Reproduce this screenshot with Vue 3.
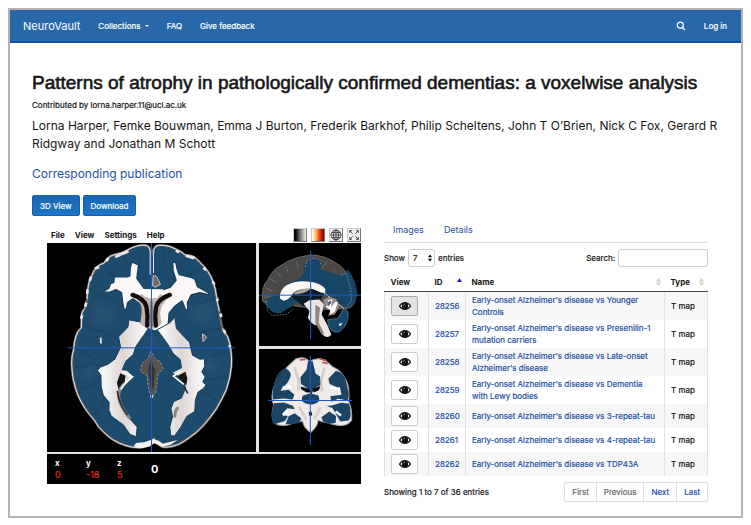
<script setup>
import { ref } from 'vue'

const images = [
  { id: 28256, name: "Early-onset Alzheimer's disease vs Younger Controls" },
  { id: 28257, name: "Early-onset Alzheimer's disease vs Presenilin-1 mutation carriers" },
  { id: 28258, name: "Early-onset Alzheimer's disease vs Late-onset Alzheimer's disease" },
  { id: 28259, name: "Early-onset Alzheimer's disease vs Dementia with Lewy bodies" },
  { id: 28260, name: "Early-onset Alzheimer's disease vs 3-repeat-tau" },
  { id: 28261, name: "Early-onset Alzheimer's disease vs 4-repeat-tau" },
  { id: 28262, name: "Early-onset Alzheimer's disease vs TDP43A" }
]
const selected = ref(28256)
const pageSize = ref('7')
const search = ref('')
</script>

<template>
  <div class="frame">
    <nav class="navbar">
      <a class="brand" href="#">NeuroVault</a>
      <a href="#">Collections <span class="caret"></span></a>
      <a href="#">FAQ</a>
      <a href="#">Give feedback</a>
      <a class="search-link" href="#" aria-label="Search">
        <svg viewBox="0 0 10 10"><circle cx="4.3" cy="4.2" r="3" /><path d="M6.5 6.5 9 9" /></svg>
      </a>
      <a href="#">Log in</a>
    </nav>

    <main>
      <h1>Patterns of atrophy in pathologically confirmed dementias: a voxelwise analysis</h1>
      <p class="contributor">Contributed by lorna.harper.11@ucl.ac.uk</p>
      <p class="authors">Lorna Harper, Femke Bouwman, Emma J Burton, Frederik Barkhof, Philip Scheltens, John T O’Brien, Nick C Fox, Gerard R Ridgway and Jonathan M Schott</p>
      <p class="publication"><a href="#">Corresponding publication</a></p>
      <div class="actions">
        <button type="button">3D View</button>
        <button type="button">Download</button>
      </div>

      <div class="columns">
        <section class="viewer">
          <div class="menu">
            <button type="button">File</button>
            <button type="button">View</button>
            <button type="button">Settings</button>
            <button type="button">Help</button>
            <div class="tools">
              <button type="button" aria-label="Grayscale"><span class="gray-map"></span></button>
              <button type="button" aria-label="Heat"><span class="heat-map"></span></button>
              <button type="button" aria-label="Orientation">
                <svg viewBox="0 0 14 14"><circle cx="7" cy="7" r="5.800" /><ellipse cx="7" cy="7" rx="2.800" ry="5.800" /><path d="M7 1v12M1 7h12M2.200 4.100h9.600M2.200 9.900h9.600" /></svg>
              </button>
              <button type="button" aria-label="Expand">
                <svg viewBox="0 0 14 14"><path d="M5.500 5.500 3 3M8.500 5.500 11 3M5.500 8.500 3 11M8.500 8.500 11 11" /><path class="solid" d="M1.500 1.500h3.500L1.500 5zM12.500 1.500V5L9 1.500zM1.500 12.500V9L5 12.500zM12.500 12.500H9L12.500 9z" /></svg>
              </button>
            </div>
          </div>

          <div class="panels">
            <svg class="axial" viewBox="20 10 628 628">
              <defs>
                <filter id="soft"><feGaussianBlur stdDeviation="1.8" /></filter>
                <filter id="haze"><feGaussianBlur stdDeviation="9" /></filter>
                <linearGradient id="matter" x1="0" x2="1">
                  <stop offset="0" stop-color="#fff" /><stop offset=".5" stop-color="#ddd6d4" /><stop offset="1" stop-color="#fff" />
                </linearGradient>
              </defs>
              <g filter="url(#soft)">
                <path fill="#1e4b6d" stroke="#6a6664" stroke-width="7" stroke-linejoin="round" d="M335 45Q333 22 318 17Q304 15 290 19Q275 23 262 31Q245 41 232 43Q219 45 208 51Q198 58 192 70Q179 74 170 82Q160 93 155 107Q146 124 144 140Q139 160 141 178L133 207Q122 219 124 230L123 265Q111 275 107 290Q101 309 100 330Q94 350 94 370Q95 398 99 420Q104 443 112 465Q122 488 135 508Q147 526 162 542Q173 563 187 575Q200 588 216 600Q235 612 255 618Q278 626 300 625Q316 623 325 617L341 598L353 613Q363 624 376 624Q395 623 415 615Q432 607 450 593Q472 578 490 558Q511 535 529 508Q546 479 559 450Q571 415 574 380Q576 354 572 330Q570 308 562 290Q549 277 547 265Q540 240 538 215Q532 192 529 170Q527 150 520 130Q514 110 503 95Q494 81 480 69Q472 58 460 51Q448 46 435 46Q424 36 410 30Q391 18 370 17Q355 15 347 20Q337 28 335 45Z" />
                <path fill="none" stroke="#eee9e8" stroke-width="3" d="M330 105V34Q325 17 318 17Q304 15 290 19Q275 23 262 31Q245 41 232 43Q219 45 208 51Q198 58 192 70Q179 74 170 82Q160 93 155 107Q146 124 144 140Q139 160 141 178M133 207Q122 219 124 230L123 265Q111 275 107 290Q101 309 100 330Q94 350 94 370Q95 398 99 420Q104 443 112 465Q122 488 135 508Q147 526 162 542Q173 563 187 575Q200 588 216 600Q235 612 255 618Q278 626 300 625Q316 623 325 617L341 598L353 613Q363 624 376 624Q395 623 415 615Q432 607 450 593Q472 578 490 558Q511 535 529 508Q546 479 559 450Q571 415 574 380Q576 354 572 330Q570 308 562 290Q549 277 547 265M538 215Q532 192 529 170Q527 150 520 130Q514 110 503 95Q494 81 480 69Q472 58 460 51Q448 46 435 46Q424 36 410 30Q391 18 370 17Q355 15 347 20Q339 28 340 45V100" />
                <g fill="none" stroke="#ece7e6" stroke-width="8">
                  <path stroke-dasharray="13 27" d="m205 55-17 22-23 10-13 25-10 33-2 38-9 30-9 25" />
                  <path stroke-dasharray="11 39" d="m407 33 26 13 28 8 42 43 19 36 9 43 10 42 8 50 17 30 5 34" />
                  <path d="m225 52 40-17M437 48l25 8" />
                </g>
                <path fill="#f4f0ef" d="m280 621 8-10 24-2 11-4 15-5 18 4 12 9 24-6 20-5-20 14-25 6-25-10-15 10-26 5z" />
                <g fill="none" stroke="#143a57" stroke-width="6" opacity=".4" stroke-linecap="round">
                  <path d="M200 95q20 8 35 35M165 160l50 18M150 265l68 22M118 330l48 30M110 385l46-10M125 450l45-24M168 525l25-42M245 48l16 20M530 175l-64 20M545 265l-75 18M565 335l-48 14M563 410l-52 10M535 485l-56-35M490 545l-35-44M472 90l-30 20M425 67l-10 15M370 35v40M300 45v40" />
                </g>
                <g fill="#406580" opacity=".25" filter="url(#haze)"><circle cx="190" cy="225" r="34" /><circle cx="488" cy="220" r="34" /><circle cx="335" cy="310" r="20" /><circle cx="510" cy="380" r="24" /><circle cx="150" cy="400" r="22" /></g>
              </g>
              <g filter="url(#soft)">
                <path fill="#faf7f6" stroke="#17405f" stroke-width="4" stroke-linejoin="round" d="m275 67-5 18-1 24-7 3-40-1-1 17-10 4-5 14-21 12 26-1 16-7 17 9 3 26 4 23 7 2 4-21 16-11 20 14 18 9 7 24-4 31 22 19 33-7 10-10 3-37 17-21 22-16 10 26 7 1-1-22 11-23 26-7 26 6 2-4-35-20-8-23-12-5-35-8-6-17-4-19-9-2 1 27 9 28-18 21-28 9-26 4-24-9-22-31 5-40z" />
                <path fill="url(#matter)" stroke="#17405f" stroke-width="3" d="M298 247 266 241 263 263 235 292 241 323 224 359 204 374 180 383 172 393 182 407 183 441 189 467 207 489 206 512 213 530 250 557 269 585 288 592 291 563 273 543 253 516 243 493 236 456 250 438 280 411 260 392 246 391 257 365 279 345 287 321 305 295 324 268z" />
                <path fill="url(#matter)" stroke="#17405f" stroke-width="3" d="m351 271 39-22 14-16 5 34 25 27 14 14 9 39 22 12 14-1 1 22-9 17 10 15-7 16 10 8-8 11-16 11-8 23-2 35-24 15-17 31-20 28-11-1-3-26 8-30-4-26 7-20 24-11 12-30-6-18-21-21-15-7 30-15-4-25-20-17-16-27-17-24z" />
                <path fill="#bdb3ac" d="M285 175Q308 192 304 222L300 252Q334 284 364 252L360 222Q362 192 385 175L350 158H315z" />
                <path fill="#fff" d="m290 148 80 1-17 25-19 3-21-6z" />
                <path fill="none" stroke="#15100e" stroke-width="13" stroke-linecap="round" d="M277 166Q313 177 319 202Q324 228 321 258M389 166Q354 178 348 202Q343 228 347 258" />
                <path fill="#857c77" d="M330 186h8l2 72-6 8-6-8z" />
                <path fill="#161313" d="m240 401 16 8-3 19-18 22-5-20zM412 410l24-13 6 21-4 20z" />
                <path fill="none" stroke="#8d8581" stroke-width="9" d="M256 430Q228 452 238 486Q249 514 270 538M416 505Q404 508 404 534" />
                <path fill="none" stroke="#312e2e" stroke-width="5" d="M231 454Q238 497 262 527M432 442l11 20" />
                <path fill="none" stroke="#fff" stroke-width="5" d="m247 396 30 16-26 24-9 14M424 394l-24 16 31 25" />
                <path fill="#59534f" stroke="#918a84" stroke-width="3" stroke-dasharray="8 5" d="m333 334-10 25-18 14-4 22 20 14 3 34 9 31 13-12 5-37 3-20 15-17-9-22-15-8z" />
                <path fill="#393431" d="m332 360-8 29 8 61 8-5 5-54z" />
                <path fill="#e7dfe0" d="m330 471 5-7 5 8-7 7zM179 294l5 1 1 18-6-2z" />
                <path fill="#72676a" stroke="#cfc3c4" stroke-width="3" d="m487 283 13 10-11 14zM339 108l10 2 12 24-17 9-7-5z" />
              </g>
              <path class="cross" d="M82 325h502M334 10v628" />
            </svg>

            <svg class="sagittal" viewBox="11 70 306 310" preserveAspectRatio="none">
              <g filter="url(#soft)">
                <path fill="#4b4846" stroke="#6d6966" stroke-width="3" d="M21 244Q20 195 36 184Q51 149 77 138Q108 114 167 106Q208 107 241 130Q270 145 284 181Q308 217 301 234Q298 268 269 267L209 270L138 262L90 255L43 261Z" />
                <path fill="none" stroke="#6f6d6b" stroke-width="3" d="M27 234l18-4M31 205l20 10M45 178l19 11M63 157l16 16M90 139l10 20M123 125l6 21M215 125l-15 22M242 148l-14 15" />
                <path fill="#184565" d="M31 254Q34 232 51 232L78 219Q86 193 105 190L135 175Q151 160 148 132L165 118L187 117Q204 126 201 134L193 149L224 157 259 169 278 150Q304 185 306 225L295 257 276 265 248 251 208 217 147 224 116 257 76 281Q47 286 31 254Z" />
                <path fill="none" stroke="#a5aaad" stroke-width="2" stroke-dasharray="5 4" d="m151 142 2-17 24-10 21 8-3 13M34 244l2 30 15 14 42-3 21-17M258 167l13-8 15 45 2 40-15 20" />
                <path fill="#101b27" d="m101 225 55-21 26 1 24 17-11 20-49 20z" />
                <path fill="#fbf8f7" d="M74 237Q70 214 93 197Q127 180 165 187Q196 192 210 208L209 221L196 219Q171 205 160 208Q132 207 114 220Q103 242 84 244Z" />
                <path fill="none" stroke="#d9d6d4" stroke-width="3" d="M203 217l66 53" />
                <path fill="#aaa19c" d="M113 222l26-14 27 1-19 11-25 5z" />
                <path fill="#ece6e3" d="M145 253l17-11 30-2 14 15-7 30 17 32 12 29q-14 16-31-7l-9-22q-17 3-30-21l4-21z" />
                <path fill="#908781" d="m180 255 14 9-4 45 16 33-6 5-20-36z" />
                <path fill="#17476a" stroke="#78838a" stroke-width="2" d="M217 301l30-4 20-32 11 13q5 34-25 59-22 7-34-19z" />
                <path fill="#998985" d="m205 239 18-7 20 7 9 25-14 21-20 4 9-16-23-11z" />
                <path fill="#fff" d="m217 242 14-3-4 25 12-16 9-1-10 31-16 8 3-14-14-10 12-7zM250 314l12-4-8 11z" />
                <path fill="#286493" d="m224 242 5 6-11 14 1-14z" />
              </g>
              <path class="cross" d="M11 227h306M166 93v267" />
            </svg>

            <svg class="coronal" viewBox="11 15 306 308" preserveAspectRatio="none">
              <g filter="url(#soft)">
                <path fill="#f0eae8" stroke="#aaa6a6" stroke-width="3" d="M121 45Q140 39 150 43L163 52Q184 38 209 48L233 69Q258 80 272 108Q284 130 280 171Q291 195 289 227Q278 245 251 244Q225 240 188 228Q189 243 167 264Q147 255 141 230L113 237Q81 250 58 237Q44 222 55 181Q43 160 59 119Q67 90 92 72Z" />
                <path fill="#1a4565" d="M91 72Q109 84 106 96Q100 117 80 132l-4 8 24-3 17 15-5 14-28-3-31 3Q49 138 61 103Q72 78 91 72zM56 177l29-2 28 10 5 10-22-3-16 17 18 8-10 14-34 10Q43 215 56 177zM91 239l9-23 18-9 20 15-7 15-25 3zM158 51l14 1 9 37 13 8 3 25-20 10-9 19-10-18-21-13-2-20 19-24zM242 80Q267 86 272 111L281 150 277 169 248 164 228 173 225 156 258 152 255 134 223 120 219 104zM229 184l29-8 24 3Q291 220 280 229L255 232 247 218 232 192 214 185zM198 219l24-17 20 13-1 21-23 3-15-8zM142 155l23-8 24 7q11 24-23 27-35-3-24-26z" />
                <path fill="none" stroke="#fff" stroke-width="8" d="m82 130 25-3M223 131l31 3M83 213l15-14M241 202l16 12" />
                <path fill="#090b0e" d="m136 127 23 6 9 11-14 1-16-9zM171 134l24-8-4 12-16 7zM160 205l7-5 4 12-8 4z" />
                <path fill="none" stroke="#c5bdb9" stroke-width="8" opacity=".6" d="m118 70 13 42-2 28M208 70l-11 42 3 30M132 188l20 38M195 190l-18 34" />
                <path fill="none" stroke="#c3524e" stroke-width="5" d="m133 48 17-2M193 44l20 6M201 55l16 3" />
              </g>
              <path class="cross" d="M39 169h251M165 35v267" />
            </svg>
          </div>
          <dl class="coords">
            <div><dt>x</dt><dd>0</dd></div>
            <div><dt>y</dt><dd>-18</dd></div>
            <div><dt>z</dt><dd>5</dd></div>
            <div class="value">0</div>
          </dl>
        </section>

        <section>
          <div class="tabs">
            <a href="#">Images</a>
            <a href="#">Details</a>
          </div>
          <div class="filters">
            <label>Show
              <span class="select">
                <select v-model="pageSize"><option>7</option><option>25</option></select>
                <svg viewBox="0 0 4 8"><path d="M0 3.300 2 .5l2 2.800zM0 4.700h4L2 7.500z" /></svg>
              </span>
              entries</label>
            <label>Search: <input v-model="search" type="text"></label>
          </div>
          <table>
            <colgroup><col class="c-view"><col class="c-id"><col><col class="c-type"></colgroup>
            <thead>
              <tr>
                <th>View</th>
                <th><span class="head">ID <svg viewBox="0 0 5 8"><path fill="#2a1fb5" d="M0 4 2.500 0 5 4z" /></svg></span></th>
                <th><span class="head">Name <svg viewBox="0 0 5 8"><path fill="#cfcfcf" d="M0 3.500 2.500 0 5 3.500zM0 4.500h5L2.500 8z" /></svg></span></th>
                <th><span class="head">Type <svg viewBox="0 0 5 8"><path fill="#cfcfcf" d="M0 3.500 2.500 0 5 3.500zM0 4.500h5L2.500 8z" /></svg></span></th>
              </tr>
            </thead>
            <tbody>
              <tr v-for="image in images" :key="image.id">
                <td>
                  <button class="eye" :class="{ active: image.id === selected }" type="button" :aria-label="'View ' + image.id" @click="selected = image.id">
                    <svg viewBox="0 0 12 8"><path d="M.5 4.200C2 1.700 3.900.7 6 .7s4 1 5.500 3.500C10 6.500 8.100 7.400 6 7.400S2 6.500.5 4.200z" fill="#fff" stroke="#111" stroke-width="1.200" /><circle cx="6" cy="3.900" r="3.200" fill="#111" /><path d="M4.600 3.400c0-.9.600-1.300 1.400-1.300" fill="none" stroke="#ccc" stroke-width=".6" /></svg>
                  </button>
                </td>
                <td><a href="#">{{ image.id }}</a></td>
                <td><a href="#">{{ image.name }}</a></td>
                <td>T map</td>
              </tr>
            </tbody>
          </table>
          <div class="footer">
            <span>Showing 1 to 7 of 36 entries</span>
            <div class="pages">
              <button type="button" disabled>First</button>
              <button type="button" disabled>Previous</button>
              <button type="button">Next</button>
              <button type="button">Last</button>
            </div>
          </div>
        </section>
      </div>
    </main>
  </div>
</template>

<style>
body { background: #fff; }
</style>

<style scoped>
.frame {
  margin: 8px;
  border: 2px solid #b4b4b4;
  color: #161616;
  font: 8px/12px Inter, "Liberation Sans", Arial, sans-serif;
}
.frame *, .frame { box-sizing: border-box; }
a { color: #2450a4; text-decoration: none; }
button, input, select { font: inherit; color: inherit; margin: 0; padding: 0; }
svg { display: block; }
h1, p, dl, dd { margin: 0; }

.navbar {
  display: flex;
  align-items: center;
  gap: 18px;
  height: 33px;
  padding: 0 14px 0 13px;
  background: #2868a9;
  border-bottom: 2px solid #0f52a0;
}
.navbar a { color: #fff; -webkit-text-stroke: 0.2px #fff; }
.navbar .brand { font-size: 11px; -webkit-text-stroke: 0; }
.caret {
  display: inline-block;
  margin-left: 2px;
  border: 2px solid transparent;
  border-top-color: #fff;
  border-bottom: 0;
  vertical-align: middle;
}
.search-link { margin-left: auto; }
.search-link svg { width: 10px; height: 10px; fill: none; stroke: #fff; stroke-width: 1.3; }

main { padding: 28px 18px 14px 22px; }
h1 {
  font-family: "Liberation Sans", Arial, sans-serif;
  font-size: 19px;
  line-height: 24px;
  font-weight: normal;
  -webkit-text-stroke: 0.6px #161616;
}
.contributor { margin-top: 4px; -webkit-text-stroke: 0.2px #161616; }
.authors { margin-top: 6px; font-size: 12px; line-height: 18px; }
.publication { margin-top: 12px; font-size: 12px; line-height: 18px; }
.actions { display: flex; gap: 3px; margin-top: 12px; }
.actions button {
  height: 21px;
  padding: 0 7px;
  border: 1px solid #1560b0;
  border-radius: 2px;
  background: linear-gradient(#1a66b2, #1c76c8);
  color: #fff;
  -webkit-text-stroke: 0.2px #fff;
}

.columns {
  display: grid;
  grid-template-columns: minmax(0, 329fr) minmax(0, 324fr);
  gap: 23px;
  padding-right: 15px;
}
.viewer { padding-left: 15px; }
.menu { display: flex; align-items: center; gap: 10px; padding: 12px 0 1px 4px; }
.menu > button { border: 0; background: none; font-weight: bold; }
.tools { display: flex; gap: 4px; margin-left: auto; }
.tools button {
  display: flex;
  width: 14px;
  height: 14px;
  border: 1px solid #ccc;
  border-right-color: #777;
  border-bottom-color: #777;
  background: #eee;
}
.tools span { flex: 1; }
.gray-map { background: linear-gradient(90deg, #050505 15%, #555 40%, #eee); }
.heat-map { background: linear-gradient(90deg, #fff, #ffc95c 30%, #e8330f 65%, #700); }
.tools svg { width: 12px; height: 12px; fill: none; stroke: #333; stroke-width: 1; }
.tools .solid { fill: #333; stroke: none; }

.panels {
  display: grid;
  grid-template-columns: 209fr 102fr;
  gap: 3px;
  background: #e4e4e4;
}
.panels svg { width: 100%; background: #000; }
.axial { grid-row: span 2; aspect-ratio: 1; }
.sagittal, .coronal { aspect-ratio: 102 / 103; }
.cross { fill: none; stroke: #1c5bc9; stroke-width: 3; }
.coords {
  display: flex;
  align-items: center;
  height: 32px;
  padding-left: 8px;
  border-top: 2px solid #e4e4e4;
  background: #000;
  color: #fff;
  font-weight: bold;
}
.coords div { width: 31px; }
.coords dd { color: #e8281c; font-size: 9px; font-weight: normal; -webkit-text-stroke: 0.2px #e8281c; }
.coords .value { padding-left: 3px; font-size: 11px; }

.tabs {
  display: flex;
  gap: 20px;
  height: 27px;
  padding: 7px 9px 0;
  border-bottom: 1px solid #ddd;
  font-size: 9px;
  line-height: 14px;
}
.filters { display: flex; justify-content: space-between; margin-top: 6px; }
.filters label { display: flex; align-items: center; gap: 3px; -webkit-text-stroke: 0.2px #161616; }
.filters input, .filters select {
  height: 18px;
  border: 1px solid #ccc;
  border-radius: 3px;
  background: #fff;
}
.filters input { width: 90px; padding: 0 4px; }
.select { position: relative; }
.select select { display: block; appearance: none; width: 27px; padding: 0 4px; }
.select svg { position: absolute; right: 3px; top: 5px; width: 4px; height: 8px; }

table { width: 100%; margin-top: 6px; table-layout: fixed; border-collapse: collapse; }
.c-view { width: 44px; }
.c-id { width: 37px; }
.c-type { width: 43px; }
th { height: 18px; padding: 0 6px; text-align: left; border-bottom: 1px solid #444; }
th + th { padding-right: 4px; }
.head { display: flex; align-items: center; justify-content: space-between; }
.head svg { width: 5px; height: 8px; }
td { padding: 2px 4px 2px 6px; border: solid #e2e2e2; border-width: 0 1px; -webkit-text-stroke: 0.2px; }
tbody tr:nth-child(odd) { background: #f7f7f7; }
.eye {
  display: flex;
  align-items: center;
  justify-content: center;
  width: 27px;
  height: 20px;
  border: 1px solid #ccc;
  border-radius: 2px;
  background: #fff;
}
.eye.active { background: #e3e3e3; border-color: #aaa; }
.eye svg { width: 12px; height: 8px; }

.footer { display: flex; justify-content: space-between; align-items: center; margin-top: 6px; -webkit-text-stroke: 0.2px; }
.pages { display: flex; border: 1px solid #ddd; border-radius: 2px; }
.pages button { height: 18px; padding: 0 7px; border: 0; background: #fff; color: #1c4da9; -webkit-text-stroke: 0.2px; }
.pages button + button { border-left: 1px solid #ddd; }
.pages button:disabled { color: #666; }
</style>
